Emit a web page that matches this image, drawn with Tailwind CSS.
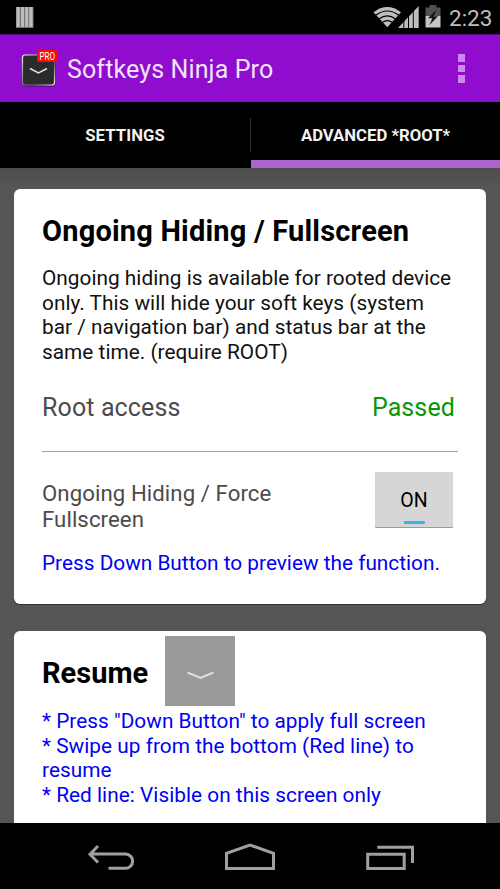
<!DOCTYPE html>
<html lang="en">
<head>
<meta charset="utf-8">
<title>Softkeys Ninja Pro</title>
<script src="https://cdn.jsdelivr.net/npm/@tailwindcss/browser@4"></script>
</head>
<body class="font-[Roboto,sans-serif] bg-black">
<div class="w-[500px] h-[889px] flex flex-col overflow-hidden bg-[#555555] whitespace-nowrap">
  <!-- Status bar -->
  <div class="h-[34px] shrink-0 bg-black flex items-start">
    <svg class="ml-4 mt-[7px]" width="18" height="21" viewBox="0 0 18 21"><rect width="17.500" height="21" fill="#707070"/><path d="M.5 0h3.2v20H.5zM4.9 0h3.2v20H4.9zM9.2 0h3v20h-3zM13.2 0h3.4v20h-3.4z" fill="#bdbdbd"/></svg>
    <svg class="ml-auto" width="72" height="34" viewBox="372 0 72 34">
      <path d="M373.5 12.3Q387.300 1.500 401 12.300L387.300 27.300Z" fill="#bebebe"/>
      <path d="M375.500 15.500Q387.300 6.500 399 15.500M379 18.900Q387.300 13 395.600 18.900M382.500 22.300Q387.300 19 392.200 22.300" fill="none" stroke="#000" stroke-width="1.200"/>
      <path d="M398 28L418.700 6V28Z" fill="#bebebe"/>
      <path d="M403.800 18v10M408.500 14v14M413.300 8v20" stroke="#000" stroke-width="1"/>
      <path d="M429.500 5h7v2.500h4V16h-15V7.500h4z" fill="#505050"/>
      <path d="M425.500 16h15v11.500h-15z" fill="#c4c4c4"/>
      <path d="M436.500 9.500L428 18.200h4.300L429.500 25l8.500-8.800h-4.500z" fill="#161616"/>
    </svg>
    <span class="ml-[5px] mr-[7px] w-[44px] mt-[4px] text-[22.500px] leading-[28px] text-[#bebebe]">2:23</span>
  </div>
  <!-- Action bar -->
  <div class="h-[68px] shrink-0 bg-[#900ccf] border-t border-[#5a0782] flex items-center">
    <svg class="ml-[20px] mb-[2px]" width="40" height="44" viewBox="20 46 40 44">
      <defs><linearGradient id="g" x1="0" y1="0" x2="1" y2="1"><stop offset="0" stop-color="#f0f0f0"/><stop offset=".35" stop-color="#888"/><stop offset=".65" stop-color="#666"/><stop offset="1" stop-color="#eee"/></linearGradient></defs>
      <rect x="22.500" y="55.500" width="33" height="31" rx="3" fill="#500873"/>
      <rect x="22.500" y="55" width="32" height="30" rx="2.500" fill="#2b2b2b" stroke="url(#g)" stroke-width="1.200"/>
      <path d="M30 68.500L38.500 73 47 68.500" fill="none" stroke="#e3e3e3" stroke-width="1.500"/>
      <rect x="37" y="50" width="20" height="12" rx="2" fill="#ff0808"/>
      <text x="39.500" y="60" font-family="Roboto" font-size="11" textLength="15.500" lengthAdjust="spacingAndGlyphs" fill="#fff">PRO</text>
    </svg>
    <h1 class="ml-[7px] mt-[2px] text-[25px] leading-[30px] tracking-[0.12px] text-[#f1e4f7]">Softkeys Ninja Pro</h1>
    <div class="ml-auto mr-[35px] flex flex-col gap-[3px]"><i class="size-[7.500px] bg-[#cb89ea]"></i><i class="size-[7.500px] bg-[#cb89ea]"></i><i class="size-[7.500px] bg-[#cb89ea]"></i></div>
  </div>
  <!-- Tabs -->
  <div class="h-[66px] shrink-0 bg-black flex text-[16.700px] font-bold text-[#f3f3f3] text-center">
    <div class="w-[250px] pt-[24px] leading-[20px] tracking-[0.1px]">SETTINGS</div>
    <div class="w-px h-[34px] mt-4 bg-[#2c2c2c]"></div>
    <div class="w-[249px] pt-[24px] leading-[20px] border-b-8 border-[#aa66cc]">ADVANCED *ROOT*</div>
  </div>
  <!-- Cards -->
  <main class="h-[655px] shrink-0 overflow-hidden px-[14px] pt-[21px] bg-linear-to-b from-[#4c4c4c] to-[#555555] to-[18px]">
    <section class="h-[415px] bg-white rounded-[6px] shadow-[0_1px_0_#303030] px-[28px] pt-[24px]">
      <h2 class="text-[29px] leading-[36px] font-bold tracking-[0.19px] text-black">Ongoing Hiding / Fullscreen</h2>
      <p class="mt-[17px] text-[20.800px] leading-[24.500px] tracking-[0.02px] text-[#111]">Ongoing hiding is available for rooted device<br>only. This will hide your soft keys (system<br>bar / navigation bar) and status bar at the<br>same time. (require ROOT)</p>
      <div class="mt-[29px] flex justify-between pr-[3px] text-[25px] leading-[30px] tracking-[0.12px]"><span class="text-[#4b4b4b]">Root access</span><span class="text-[#0a960a]">Passed</span></div>
      <div class="mt-[28px] h-px w-[416px] bg-[#a0a0a0]"></div>
      <div class="mt-[20px] h-[56px] flex justify-between items-start pr-[5px]">
        <p class="pt-[8px] text-[22.200px] leading-[26px] tracking-[0.08px] text-[#4b4b4b]">Ongoing Hiding / Force<br>Fullscreen</p>
        <button class="w-[78px] h-[55px] rounded-[1px] bg-[#d6d6d6] shadow-[0_1px_0_#9c9c9c] flex flex-col items-center pt-[17px] text-[19.500px] leading-[24px] text-black">ON<i class="mt-[8px] w-[21px] h-[3px] rounded-[1px] bg-[#33b5e5]"></i></button>
      </div>
      <p class="mt-[23px] text-[20.800px] leading-[25px] text-[#0000f5]">Press Down Button to preview the function.</p>
    </section>
    <section class="mt-[27px] h-[210px] bg-white rounded-t-[6px] px-[28px] pt-[5px]">
      <div class="flex items-center">
        <h2 class="w-[123px] pt-[3px] text-[29px] leading-[36px] font-bold text-black">Resume</h2>
        <svg width="70" height="70" viewBox="0 0 70 70"><path d="M0 0h70v70H0z" fill="#999"/><path d="M22.500 36.500L35.500 42 48.500 36.500" fill="none" stroke="#dedede" stroke-width="2"/></svg>
      </div>
      <p class="mt-[3px] text-[20.800px] leading-[24.500px] tracking-[0.03px] text-[#0000f5]">* Press "Down Button" to apply full screen<br>* Swipe up from the bottom (Red line) to<br>resume<br>* Red line: Visible on this screen only</p>
    </section>
  </main>
  <!-- Navigation bar -->
  <nav class="h-[66px] shrink-0 bg-black">
    <svg width="500" height="66" viewBox="0 823 500 66" fill="none" stroke="#a0a0a0" stroke-width="3">
      <path d="M91 854H125.500A7 7 0 0 1 125.500 868.300H108.500M98 846L90 854.300L98 862.500"/>
      <path d="M226.500 868.500V853.300L250 845L273.500 853.300V868.500Z"/>
      <path d="M367.700 854.200H404.200V868.500H367.700ZM377.300 847.300H412.500V863"/>
    </svg>
  </nav>
</div>
</body>
</html>
